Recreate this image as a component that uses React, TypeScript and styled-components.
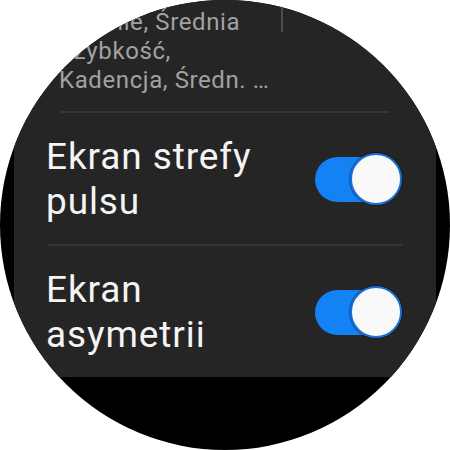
import styled, { createGlobalStyle } from 'styled-components';

const GlobalStyle = createGlobalStyle`
  html, body {
    margin: 0;
    padding: 0;
    background: #ffffff;
  }
  body {
    font-family: Roboto, "Noto Sans", "Liberation Sans", sans-serif;
  }
`;

type SwitchProps = { checked: boolean };

const Switch = ({ checked }: SwitchProps) => (
  <StyledTrack $checked={checked}>
    <StyledThumb $checked={checked} />
  </StyledTrack>
);

const settings = [
  { label: ['Ekran strefy', 'pulsu'], on: true },
  { label: ['Ekran', 'asymetrii'], on: true },
];

export default function App() {
  return (
    <>
      <GlobalStyle />
      <StyledScreen>
        <StyledWatch>
          <StyledPanel>
            <StyledSummaryRow>
              <StyledSummary>
                Średnie, Średnia
                <br />
                Szybkość,
                <br />
                Kadencja, Średn. …
              </StyledSummary>
              <StyledVDivider />
            </StyledSummaryRow>
            <StyledDivider $inset={46} />
            {settings.map((item, i) => (
              <div key={item.label.join(' ')}>
                <StyledItem>
                  <StyledLabel>
                    {item.label[0]}
                    <br />
                    {item.label[1]}
                  </StyledLabel>
                  <Switch checked={item.on} />
                </StyledItem>
                {i < settings.length - 1 && <StyledDivider $inset={34} />}
              </div>
            ))}
          </StyledPanel>
        </StyledWatch>
      </StyledScreen>
    </>
  );
}

const StyledScreen = styled.div`
  width: 450px;
  height: 450px;
  background: #ffffff;
  overflow: hidden;
`;

const StyledWatch = styled.div`
  width: 450px;
  height: 450px;
  border-radius: 50%;
  background: #000000;
  overflow: hidden;
  display: flex;
  justify-content: center;
`;

const StyledPanel = styled.div`
  width: 422px;
  height: 377px;
  background: #252525;
  display: flex;
  flex-direction: column;
`;

const StyledSummaryRow = styled.div`
  display: flex;
  align-items: flex-start;
  padding: 0 0 0 45px;
  height: 113px;
`;

const StyledSummary = styled.div`
  width: 222px;
  padding-top: 8px;
  font-size: 24px;
  line-height: 29px;
  letter-spacing: 0.6px;
  color: #a2a2a2;
  white-space: nowrap;
`;

const StyledVDivider = styled.div`
  width: 2px;
  height: 32px;
  background: #4a4a4a;
`;

const StyledDivider = styled.div<{ $inset: number }>`
  height: 2px;
  margin: 0 ${(p) => p.$inset}px;
  background: #363636;
`;

const StyledItem = styled.div`
  display: flex;
  align-items: center;
  justify-content: space-between;
  padding: 21px 34px 20px 32px;
`;

const StyledLabel = styled.div`
  font-size: 37px;
  line-height: 45px;
  letter-spacing: 0.9px;
  color: #f4f4f4;
  white-space: nowrap;
`;

const StyledTrack = styled.div<{ $checked: boolean }>`
  position: relative;
  width: 84px;
  height: 45px;
  margin-right: 3px;
  border-radius: 23px;
  background: ${(p) => (p.$checked ? '#1282f5' : '#5a5a5a')};
`;

const StyledThumb = styled.div<{ $checked: boolean }>`
  position: absolute;
  top: 50%;
  ${(p) => (p.$checked ? 'right: -3px;' : 'left: -3px;')}
  width: 48px;
  height: 48px;
  margin-top: -26px;
  border-radius: 50%;
  background: #f9f9f9;
  border: 2px solid #1c6fd6;
  box-shadow: 0 0 0 1px rgba(0, 0, 0, 0.35);
`;
